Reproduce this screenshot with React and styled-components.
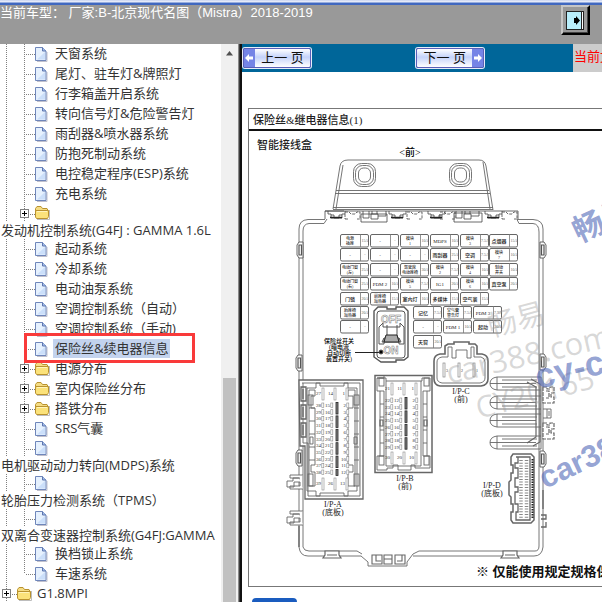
import React, { useState } from 'react';
import styled, { createGlobalStyle } from 'styled-components';

const GlobalStyle = createGlobalStyle`
	body {
		margin: 0;
		background: white;
	}
	* {
		box-sizing: border-box;
	}
`

const sans = `'Open Sans', 'Noto Sans CJK SC', sans-serif`
const arial = `'Liberation Sans', 'Noto Sans CJK SC', sans-serif`
const serif = `'Liberation Serif', 'Noto Sans CJK SC', serif`

const Page = styled.div`
	height: 100vh;
	display: flex;
	flex-direction: column;
	overflow: hidden;
`

const Header = styled.header`
	height: 44px;
	flex-shrink: 0;
	display: flex;
	justify-content: space-between;
	align-items: flex-start;
	background: linear-gradient(#c9d4f0 0, #eef2fc 2px, #4068c0 3px, #4068c0 5px, #999999 5px);
	padding: 5px 12px 0 0;
`

const CarTitle = styled.h1`
	margin: 0;
	font: 400 13px/16px ${arial};
	color: white;
	white-space: pre;
`

const ExitButton = styled.button`
	width: 29px;
	height: 30px;
	padding: 0;
	display: flex;
	align-items: center;
	justify-content: center;
	background: #999999;
	border: 2px solid;
	border-color: #c6c6c6 #000000 #000000 #c6c6c6;
	box-shadow: inset -1px -1px 0 #444444;
`

const Body = styled.div`
	flex: 1;
	min-height: 0;
	display: flex;
`

const Sidebar = styled.nav`
	width: 221px;
	flex-shrink: 0;
	overflow: hidden;
	font: 13px/20px ${sans};
	color: #333333;
`

const Row = styled.div`
	display: flex;
	height: ${props => props.$short ? '18px' : '20px'};
	position: relative;
`

const TreeLink = styled.a`
	color: inherit;
	text-decoration: none;
	white-space: nowrap;
	margin-left: 1px;
	padding: 0 2px;
	height: 19px;
	line-height: 19px;
	background: ${props => props.$active ? '#c3d3ee' : 'none'};
`

const WrappedLabel = styled.div`
	height: 17px;
	line-height: 17px;
	white-space: nowrap;
	a {
		color: inherit;
		text-decoration: none;
		margin-left: 1px;
	}
`

const Lines = styled.svg`
	flex-shrink: 0;
	display: block;
	width: ${props => props.$width};
	height: 100%;
`

const Icon = styled.svg`
	flex-shrink: 0;
	align-self: center;
	width: 17px;
	height: 16px;
`

const Highlight = styled.div`
	position: absolute;
	left: 24px;
	right: 26px;
	top: -6px;
	height: 30px;
	border: 3px solid #f93a3a;
	pointer-events: none;
	z-index: 1;
`

const Scrollbar = styled.div`
	width: 17px;
	flex-shrink: 0;
	display: flex;
	flex-direction: column;
	background: #f0f0f0;
	padding: 7px 2px 0;
`

const Track = styled.div`
	flex: 59;
`

const Thumb = styled.div`
	flex: 41;
	background: #c1c1c1;
`

const Divider = styled.div`
	width: 4px;
	flex-shrink: 0;
	background: linear-gradient(90deg, #8a8a8a 1px, #3c3c3c 1px, #3c3c3c 2px, #111111 2px);
`

const Main = styled.main`
	flex: 1;
	min-width: 0;
	overflow: hidden;
`

const Toolbar = styled.div`
	height: 28px;
	display: flex;
	background: #006699;
`

const ToolCell = styled.div`
	flex: ${props => props.$grow || 1};
	padding: 4px 1px;
`

const PageButton = styled.button`
	display: flex;
	flex-direction: ${props => props.$next ? 'row-reverse' : 'row'};
	align-items: center;
	width: 68px;
	height: 20px;
	padding: 0;
	border: 1px solid #5a5fb8;
	border-radius: 2px;
	background: linear-gradient(#ffffff, #c4d2fa 45%, #ffffff);
	box-shadow: 0 0 0 1px #e8ecfa;
	font: 400 13px/16px ${arial};
	color: #111111;
	white-space: pre;
	span {
		flex: 1;
		text-align: center;
	}
`

const Notice = styled.div`
	width: 29px;
	flex-shrink: 0;
	overflow: hidden;
	background: #cccccc;
	color: #ff0000;
	font: 13px/26px ${arial};
	white-space: nowrap;
	padding-left: 1px;
`

const Sheet = styled.section`
	margin: 36px 0 11px 6px;
	border: 1px solid #777777;
	border-right: none;
`

const SheetTitle = styled.h2`
	margin: 0;
	height: 22px;
	padding-left: 4px;
	border-bottom: 2px solid #111111;
	font: 500 11px/22px ${serif};
	color: #222222;
`

const Drawing = styled.svg`
	display: block;
	font-family: ${serif};
	height: 432px;
	width: 353px;
`

const Footnote = styled.p`
	margin: 0;
	padding-left: 227px;
	height: 23px;
	font: 700 13px/18px ${arial};
	color: #111111;
	white-space: nowrap;
	overflow: hidden;
`

const BlueTab = styled.button`
	display: block;
	width: 45px;
	height: 24px;
	margin-left: 10px;
	border: none;
	border-radius: 4px;
	background: #1a5cbf;
`

const tree = [
	{ text: '天窗系统' },
	{ text: '尾灯、驻车灯&牌照灯' },
	{ text: '行李箱盖开启系统' },
	{ text: '转向信号灯&危险警告灯' },
	{ text: '雨刮器&喷水器系统' },
	{ text: '防抱死制动系统' },
	{ text: '电控稳定程序(ESP)系统' },
	{ text: '充电系统' },
	{ text: '发动机控制系统(G4FJ : GAMMA 1.6L', folder: true, wrapped: true },
	{ text: '起动系统' },
	{ text: '冷却系统' },
	{ text: '电动油泵系统' },
	{ text: '空调控制系统（自动）' },
	{ text: '空调控制系统（手动)' },
	{ text: '保险丝&续电器信息', marked: true },
	{ text: '电源分布', folder: true },
	{ text: '室内保险丝分布', folder: true },
	{ text: '搭铁分布', folder: true },
	{ text: 'SRS气囊' },
	{ text: '电机驱动动力转向(MDPS)系统', wrapped: true },
	{ text: '轮胎压力检测系统（TPMS）', wrapped: true },
	{ text: '双离合变速器控制系统(G4FJ:GAMMA', wrapped: true },
	{ text: '换档锁止系统' },
	{ text: '车速系统', last: true },
	{ text: 'G1.8MPI', folder: true, top: true },
]

const dots = { stroke: '#808080', strokeDasharray: '1 1' }

const Indent = () => (
	<Lines $width="18px">
		<path d="M6.5 0V20" {...dots} />
	</Lines>
)

const Join = ({ folder, last }) => (
	<Lines $width="17px">
		<path d={last ? 'M6.5 0V10' : 'M6.5 0V20'} {...dots} />
		<path d="M8 10.5H17" {...dots} />
		{folder && <>
			<rect x="2.5" y="5.5" width="8" height="8" fill="white" stroke="#808080" />
			<path d="M4 9.500H9M6.500 7V12" stroke="black" />
		</>}
	</Lines>
)

const FileIcon = () => (
	<Icon viewBox="0 0 17 16">
		<path d="M2 15.5H12V6" fill="none" stroke="#c0c0cc" />
		<path d="M.5 1.5H7.5L11 5V14.5H.5Z" fill="#e6f1fe" stroke="#6f86ba" />
		<path d="M2 13.5L10 6V13.5Z" fill="#cbdffa" />
		<path d="M7.5 1.5V5H11" fill="#a4bdea" stroke="#5d76ae" />
	</Icon>
)

const FolderIcon = () => (
	<Icon viewBox="0 0 17 16">
		<path d="M2 14.5H14.5V5" fill="none" stroke="#bdbdbd" />
		<path d="M.5 12V3.5L2 1.500H6L7.5 3.500H12L13 5.500" fill="#f5dc83" stroke="#b9922f" />
		<path d="M.5 5.5H13.5V11.500L12.5 13.500H1.5L.5 12Z" fill="#fbe27a" stroke="#b9922f" />
		<path d="M2 6.5H12" stroke="#fff4bd" />
	</Icon>
)

const TreeNode = ({ node, active, onSelect }) => (
	<>
		<Row $short={node.wrapped}>
			{!node.top && <Indent />}
			<Join folder={node.folder} last={node.last} />
			{node.folder ? <FolderIcon /> : <FileIcon />}
			{!node.wrapped && <TreeLink href="#" $active={active} onClick={onSelect}>{node.text}</TreeLink>}
			{node.marked && <Highlight />}
		</Row>
		{node.wrapped && <WrappedLabel><a href="#" onClick={onSelect}>{node.text}</a></WrappedLabel>}
	</>
)

const columns = [340, 370, 400, 430, 460, 489]
const lowColumns = [340, 413, 443, 473]

const fuses = [
	[['电源/插座', '15A'], ['-', '-'], ['模块/1', '10A'], ['MDPS', '10A'], ['模块/3', '7.5A'], ['点烟器', '15A']],
	[['-', '-'], ['-', '-'], ['-', '-'], ['雨刮器', '25A'], ['空调', '7.5A'], ['模块/7', '10A']],
	[['电动门窗/(左)', '25A'], ['-', '-'], ['驾驶席/电动座椅', '30A'], ['模块/2', '7.5A'], ['模块/4', '10A'], ['制动/开关', '10A']],
	[['电动门窗/(右)', '25A'], ['PDM 2', '10A'], ['模块/5', '7.5A'], ['IG1', '20A'], ['模块/6', '10A'], ['真空泵', '20A']],
	[['门锁', '20A'], ['前座椅/加热器', '15A'], ['室内灯', '10A'], ['多媒体', '15A'], ['空气囊', '15A']],
	[['后座椅/加热器', '20A'], ['记忆', '7.5A'], ['空气囊/警告灯', '7.5A'], ['PDM 3', '7.5A']],
	[['-', '-'], ['-', '-'], ['PDM 1', '10A'], ['起动', '30A']],
	[null, ['天窗', '20A']],
]

const Fuse = ({ x, y, name, amps }) => {
	const lines = name.split('/')
	return (
		<g>
			<rect x={x + 0.5} y={y + 0.5} width="28" height="12.5" rx="1.5" fill="white" stroke="#666" />
			<path d={`M${x + 20.5} ${y}v13`} stroke="#777" strokeWidth=".8" />
			{lines.map((l, i) => (
				<text key={i} x={x + 10} y={lines.length > 1 ? y + 6 + i * 5 : y + 9} fontSize={lines.length > 1 ? 4 : 5} fontWeight="500" fill="#222" textAnchor="middle">{l}</text>
			))}
			<text x={x + 25} y={y + 8} fontSize="4" fill="#666" textAnchor="middle">{amps}</text>
		</g>
	)
}

const FuseGrid = () => fuses.map((row, r) => row.map((f, c) => f && (
	<Fuse key={r + '-' + c} x={(r > 4 ? lowColumns : columns)[c]} y={Math.round(234 + r * 14.4)} name={f[0]} amps={f[1]} />
)))

// three pin columns, long pins above and below the short ones
const Pins = ({ x, y, rows, bottom }) => {
	const starts = [rows * 2 + 5, rows + 3, 1]
	const list = [...Array(rows).keys()]
	const pin = { fill: 'white', stroke: '#888', strokeWidth: .6 }
	const label = { fontSize: 5, fill: '#333', stroke: 'none', textAnchor: 'end' }
	return (
		<g>
			{starts.map((n, c) => {
				const px = x + c * 12
				const tx = x + [-1, 8, 24][c]
				return (
					<g key={c}>
						<text x={px - 1} y={y + 7} {...label}>{n}</text>
						<rect x={px} y={y} width="2" height="12" {...pin} />
						<text x={px - 1} y={bottom + 7} {...label}>{n + rows + 1}</text>
						<rect x={px} y={bottom} width="2" height="12" {...pin} />
						{list.map(i => (
							<g key={i}>
								<text x={tx} y={y + 19 + i * 6.7} {...label}>{n + 1 + i}</text>
								<rect x={tx + .8} y={y + 15 + i * 6.7} width="2" height="4.5" {...pin} />
							</g>
						))}
					</g>
				)
			})}
			{list.filter(i => i % 2 === 0).map(i => (
				<rect key={i} x={x + 14} y={y + 14.5 + i * 6.7} width="2" height={i === rows - 1 ? 6 : 11.5} fill="#888" stroke="#222" strokeWidth=".8" />
			))}
		</g>
	)
}

const SideClip = ({ x, y }) => (
	<g fill="white" stroke="#555" strokeWidth=".9">
		<path d={`M${x + 6} ${y}h-4l-2 3v10l2 3h4z`} />
		<path d={`M${x + 2} ${y + 3}h2.5v10h-2.5z`} strokeWidth="1.2" />
	</g>
)

const TopClips = () => (
	<g fill="none" stroke="#444" strokeWidth=".8">
		<path d="M325 219V211H518V219M325 211H344M361 222V214H387V222H361Z" />
		<path d="M454 222V213H482V222H454Z" fill="white" />
		{[328, 389, 428, 485].map(x => (
			<g key={x}>
				<path d={`M${x} 211v3h3v4h11v-4h3v-3M${x + 3} 215h3v3h5v-3h3`} />
				<path d={`M${x + 2} 217.5h12`} stroke="#222" strokeWidth="1.5" />
			</g>
		))}
		{[345, 407, 440, 502].map(x => <path key={x} d={`M${x} 212h4l2 2h4l2-2h3v7h-3M${x} 219h4M${x} 214v5`} strokeDasharray="3 1" />)}
		{[363, 456].map(x => <path key={x} d={`M${x} 211v7h6v-7M${x + 8} 214h7v5h-7zM${x + 9} 211v3M${x + 14} 211v3M${x + 15} 216h8v-5`} />)}
	</g>
)

const Housing = () => (
	<g fill="none" stroke="#666" strokeWidth=".9">
		<path d="M333 209L340 166Q341 160 348 160H479Q485 160 486 166L493 210" />
		<path d="M336 209L343 165M483 162L490 209M336 190.5H489M335 193.5H490M333 207.5H493M333 209.5H493" />
		{[364.5, 460.5].map(x => (
			<g key={x}>
				<rect x={x - 11} y="163.5" width="22" height="23" rx="8" />
				<rect x={x - 9} y="165.5" width="18" height="19" rx="7" />
				<rect x={x - 6} y="168" width="12" height="14" rx="5" />
			</g>
		))}
		<path d="M327 219L324 223.5H309Q303 224 303 231V547Q304 551 309 551H357L362 554" />
		<path d="M325 219.5H308Q299 220 299 229V547Q300 556 308 556H361L368 562V566H407V562L413 554L419 551H535Q539 551 539 546V232Q539 224 533 223.5H519L517 219.5H533Q543 220 543 229V547Q542 556 534 556H413" />
		<path d="M372 555H382V564H372ZM376 555V561H381M384 555H392V564H384ZM384 559H392M395 555H405V564H395ZM397 561H402V555" strokeWidth="1.1" />
		{[325, 503].map(x => <path key={x} d={`M${x} 551h14v4l2 3h-18l2-3zM${x + 2} 555h10`} fill="white" strokeWidth="1.2" />)}
		<SideClip x={297} y={242} />
		<SideClip x={296} y={355} />
		<SideClip x={296} y={450} />
		<g transform="translate(842 0) scale(-1 1)">
			<SideClip x={296} y={242} />
			<SideClip x={296} y={354} />
			<SideClip x={296} y={451} />
		</g>
		{[475, 511].map(y => (
			<path key={y} d={`M303 ${y}h-13v3h10M303 ${y + 14}h-13v-3h10v-4h-6v5h-7v-6h6v-3h6`} fill="white" />
		))}
		<path d="M299 526V547M543 490V509M541 515H546V519H541M541 527H546V522" strokeWidth="1.3" />
	</g>
)

const Switch = () => (
	<g fill="none" stroke="#555" strokeWidth="1">
		<path d="M378 307H387V309H396V307H404L408 311V357L404 360H396V362H381L374 357V311Z" fill="white" strokeWidth="1.4" />
		<rect x="377" y="311" width="28" height="47" rx="3" />
		<path d="M379 327V344H384V338H399V344H404V327M379 327L383 323V327H400V323L404 327M387 325V338M397 325V338M384 338L382 342H401L399 338" />
		<path d="M386 335L384 342H399L397 335Z" fill="#aaa" stroke="#222" />
		<g fill="white" stroke="#777" strokeWidth=".5" fontFamily="Liberation Sans, sans-serif" fontWeight="700" fontSize="10" textAnchor="middle">
			<text x="391" y="323">OFF</text>
			<text x="391" y="354">ON</text>
		</g>
		<path d="M355 352.5H380" stroke="#222" />
		<circle cx="381" cy="352" r="2" fill="black" />
	</g>
)

const Connectors = () => (
	<g fill="none" stroke="#666" strokeWidth=".9">
		<path d="M299 380H363V499H305V446H300Z" fill="white" strokeWidth="1.3" />
		<path d="M302 383H360V496H308V443H303V383" />
		<path d="M307 388H316V383H320V386H344V383H348V388H357V491H348V496H344V493H320V496H316V491H307Z" />
		<path d="M309 390V486H315V472H311V465H315V408H311V396H315V390ZM355 390V486H348V472H353V465H348V408H353V396H348V390Z" />
		<path d="M309 408H315M309 421H315M309 434H315M309 447H315M309 460H315M354 408H359M354 421H359M354 434H359M354 447H359M354 460H359M310 437H313V444H310ZM354 437H357V444H354Z" />
		{[387, 405, 423].map(y => <path key={y} d={`M301 ${y}h5v14h-5zM303 ${y + 2}v10`} strokeWidth="1.3" />)}
		<rect x="308" y="395" width="5" height="10" />
		<rect x="354" y="395" width="5" height="10" />
		<rect x="308" y="474" width="5" height="12" />
		<rect x="354" y="474" width="5" height="12" />
		<Pins x={322} y={388} rows={11} bottom={478} />

		<rect x="375" y="375.5" width="57" height="97" fill="white" strokeWidth="1.5" />
		<path d="M377 378H384V376M377 378V391H380V456H377V470H387V468H393V465H398V470H411V465H415V468H430V456H427V391H430V378H422V381H386V378Z" />
		<path d="M380 391H384V456H380M427 391H423V456H427M380 404H384M380 417H384M380 430H384M380 443H384M423 404H427M423 417H427M423 430H427M423 443H427M386 381V466H421V381" />
		<rect x="379" y="378" width="5" height="8" />
		<rect x="424" y="378" width="5" height="8" />
		<rect x="379" y="456" width="5" height="9" />
		<rect x="424" y="456" width="5" height="9" />
		<path d="M380 420H383V426H380ZM424 420H427V426H424Z" strokeWidth="1.2" />
		<Pins x={391} y={383} rows={8} bottom={452} />

		<path d="M440 354H445V346L448 344H454V342H469V344H475L477 346V354H482Q488 355 488 361V379Q488 385 481 386H440Q434 385 434 379V361Q434 355 440 354Z" fill="white" strokeWidth="1.6" />
		<path d="M442 357H448V347H452V358H456V350H467V358H471V347H474V357H481Q485 358 485 362V378Q485 382 480 383H442Q437 382 437 378V362Q437 358 442 357Z" />
		{[443, 458, 473].map((x, i) => (
			<g key={x}>
				<rect x={x} y="363" width="2" height="14" stroke="#888" strokeWidth=".7" />
				<text x={x + 3} y="372" fontSize="4" stroke="none" fill="#333">{3 - i}</text>
			</g>
		))}

		{[377, 396, 414, 436].map(y => (
			<path key={y} d={`M541 ${y}H497Q490 ${y + 1} 490 ${y + 6.5}T497 ${y + 13}H541M490 ${y + 6.5}H536M497 ${y}V${y + 13}M502 ${y + 3}H537M502 ${y + 10}H537`} />
		))}
		<path d="M527 382L536 387V437L527 443M531 379L540 384V442L533 446" strokeWidth="1.2" />
		<path d="M541 377V449" />
		{[387, 423].map(y => <path key={y} d={`M543 ${y}h4v2h3v-2h4v6h-3v4h3v6h-11zM546 ${y + 4}h3v7h-3`} fill="white" strokeDasharray="4 1" strokeWidth="1.2" />)}
		<path d="M543 409H551V418H543M547 409V418M549 411V416" />

		<path d="M513 454H531L534 457V520L531 523H513L511 520V512H513V504H511V497L509 495V482L511 480V473H513V465H511V457Z" fill="white" strokeWidth="1.5" />
		<path d="M516 457H530V520H516V512H518V504H515V492H518V487H515V478H518V468H515V463H518V457" strokeWidth="1.3" />
		<path d="M532.5 459V519" stroke="#222" strokeWidth="2" strokeDasharray="1.5 1" />
		<path d="M521 460V518M526.5 460V518" stroke="#888" strokeWidth="3.5" strokeDasharray="1 1.7" />
	</g>
)

const Watermarks = () => (
	<g>
		<g fill="#999" fillOpacity=".38" fontFamily="Open Sans, Noto Sans CJK SC, sans-serif">
			<text transform="translate(491 337) rotate(-15)" fontSize="29">畅易</text>
			<text transform="translate(449 384) rotate(-13)" fontSize="31">car388.com</text>
			<text transform="translate(479 419) rotate(-15)" fontSize="30">CY20165</text>
		</g>
		<g fill="#5068b8" fillOpacity=".62" fontWeight="700">
			<text transform="translate(579 243) rotate(-25)" fontSize="31" fontFamily="Noto Sans CJK SC, sans-serif">畅易</text>
			<g fontFamily="Liberation Sans, sans-serif">
				<text transform="translate(538 389) rotate(-13)" fontSize="35">cy-car</text>
				<text transform="translate(545 489) rotate(-25)" fontSize="31">car388</text>
			</g>
		</g>
	</g>
)

const FuseBox = () => (
	<Drawing viewBox="249 131 353 432" overflow="visible" role="img" aria-label="智能接线盒">
		<text x="257" y="149" fontSize="11" fontWeight="500" fill="#222">智能接线盒</text>
		<text x="410" y="156" fontSize="10" fontWeight="500" textAnchor="middle">&lt;前&gt;</text>
		<Housing />
		<TopClips />
		<FuseGrid />
		<Switch />
		<Connectors />
		<g fontSize="6" fontWeight="500" textAnchor="middle">
			{['保险丝开关', '(暗电流', '自动切断', '装置开关)'].map((t, i) => <text key={t} x="339" y={343 + i * 6}>{t}</text>)}
		</g>
		<g fontSize="8" fill="#222" textAnchor="middle">
			<text x="333" y="507">I/P-A</text>
			<text x="333" y="515">(底板)</text>
			<text x="405" y="481">I/P-B</text>
			<text x="405" y="489">(前)</text>
			<text x="461" y="394">I/P-C</text>
			<text x="461" y="402">(前)</text>
			<text x="492" y="488">I/P-D</text>
			<text x="492" y="496">(底板)</text>
		</g>
		<Watermarks />
	</Drawing>
)

const Arrow = ({ next }) => (
	<svg width="11" height="18" viewBox="0 0 11 18">
		<rect width="11" height="18" fill="#7584e6" />
		<path d={next ? 'M10 9L6 5V7.5H2V10.5H6V13Z' : 'M1 9L5 5V7.5H9V10.5H5V13Z'} fill="white" />
	</svg>
)

const App = () => {

	const [selected, setSelected] = useState(14)

	const select = (e, i) => {
		e.preventDefault()
		setSelected(i)
	}

	return (
		<Page>
			<GlobalStyle />
			<Header>
				<CarTitle>当前车型： 厂家:B-北京现代名图（Mistra）2018-2019</CarTitle>
				<ExitButton aria-label="退出">
					<svg width="19" height="19" viewBox="0 0 19 19">
						<rect x=".5" y=".5" width="17" height="18" fill="#b9eefb" stroke="#222" />
						<path d="M15 1H17V18H15Z" fill="white" />
						<path d="M15.5 1V18" stroke="#222" />
						<path d="M8 7H10V5L14 9.5L10 14V12H8Z" fill="black" />
					</svg>
				</ExitButton>
			</Header>
			<Body>
				<Sidebar>
					{tree.map((node, i) => (
						<TreeNode key={i} node={node} active={i === selected} onSelect={e => select(e, i)} />
					))}
				</Sidebar>
				<Scrollbar>
					<svg width="13" height="5" viewBox="0 0 13 5"><path d="M3 4.5L6.5 0L10 4.5Z" fill="#505050" /></svg>
					<Track />
					<Thumb />
				</Scrollbar>
				<Divider />
				<Main>
					<Toolbar>
						<ToolCell $grow={11}>
							<PageButton><Arrow /><span>上一 页</span></PageButton>
						</ToolCell>
						<ToolCell $grow={10}>
							<PageButton $next><Arrow next /><span>下一 页</span></PageButton>
						</ToolCell>
						<Notice>当前文</Notice>
					</Toolbar>
					<Sheet>
						<SheetTitle>保险丝&amp;继电器信息(1)</SheetTitle>
						<FuseBox />
						<Footnote>※ 仅能使用规定规格保险丝</Footnote>
					</Sheet>
					<BlueTab aria-label="打印" />
				</Main>
			</Body>
		</Page>
	)
}

export default App
